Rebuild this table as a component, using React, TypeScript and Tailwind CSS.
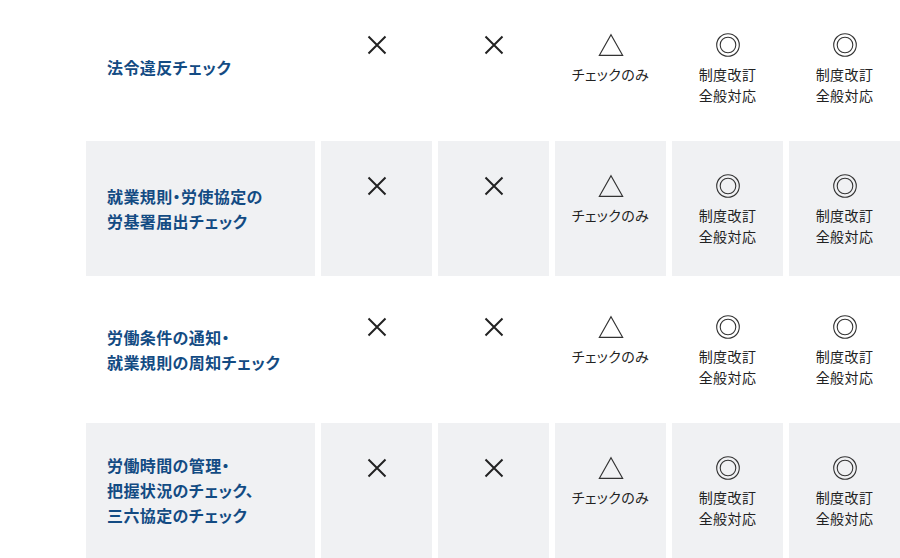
import type { ReactNode } from 'react';

type Mark = 'cross' | 'triangle' | 'double';

interface Cell {
  mark: Mark;
  label?: string[];
}

interface Row {
  title: string[];
  cells: Cell[];
}

const standardCells: Cell[] = [
  { mark: 'cross' },
  { mark: 'cross' },
  { mark: 'triangle', label: ['チェックのみ'] },
  { mark: 'double', label: ['制度改訂', '全般対応'] },
  { mark: 'double', label: ['制度改訂', '全般対応'] },
];

const rows: Row[] = [
  { title: ['法令違反チェック'], cells: standardCells },
  { title: ['就業規則・労使協定の', '労基署届出チェック'], cells: standardCells },
  { title: ['労働条件の通知・', '就業規則の周知チェック'], cells: standardCells },
  { title: ['労働時間の管理・', '把握状況のチェック、', '三六協定のチェック'], cells: standardCells },
];

function MarkIcon({ mark }: { mark: Mark }) {
  if (mark === 'cross') {
    return (
      <svg width="24" height="24" viewBox="0 0 24 24" fill="none">
        <path d="M3.5 3.5L20.5 20.5M20.5 3.5L3.5 20.5" stroke="#222" strokeWidth="2" />
      </svg>
    );
  }
  if (mark === 'triangle') {
    return (
      <svg width="26" height="24" viewBox="0 0 26 24" fill="none">
        <path d="M13 1.8L24.6 22.3H1.4Z" stroke="#333" strokeWidth="1.2" strokeLinejoin="miter" />
      </svg>
    );
  }
  return (
    <svg width="24" height="24" viewBox="0 0 24 24" fill="none">
      <circle cx="12" cy="12" r="11.3" stroke="#333" strokeWidth="1.1" />
      <circle cx="12" cy="12" r="7.8" stroke="#333" strokeWidth="1.1" />
    </svg>
  );
}

function Box({ shaded, children }: { shaded: boolean; children: ReactNode }) {
  return <div className={shaded ? 'bg-[#f0f1f3]' : 'bg-white'}>{children}</div>;
}

export default function App() {
  return (
    <div
      className="w-[900px] h-[558px] bg-white pl-[86px] overflow-hidden [font-feature-settings:'palt']"
      style={{ fontFamily: '"Noto Sans CJK JP", "Noto Sans", sans-serif' }}
    >
      <div className="grid grid-cols-[229px_repeat(5,111px)] auto-rows-[135px] gap-[6px]">
        {rows.map((row, i) => {
          const shaded = i % 2 === 1;
          return [
            <Box key={`t${i}`} shaded={shaded}>
              <div className="h-full flex flex-col justify-center pl-[21px] text-[16px] leading-[25px] font-bold tracking-[0.025em] text-[#134b83]">
                {row.title.map((line) => (
                  <span key={line}>{line}</span>
                ))}
              </div>
            </Box>,
            ...row.cells.map((cell, j) => (
              <Box key={`c${i}-${j}`} shaded={shaded}>
                <div className="flex flex-col items-center pt-[33px]">
                  <div className="h-6 flex items-center justify-center">
                    <MarkIcon mark={cell.mark} />
                  </div>
                  {cell.label && (
                    <div className="mt-[7px] text-[14px] leading-[21px] tracking-[0.03em] text-[#222] text-center">
                      {cell.label.map((line) => (
                        <div key={line}>{line}</div>
                      ))}
                    </div>
                  )}
                </div>
              </Box>
            )),
          ];
        })}
      </div>
    </div>
  );
}
